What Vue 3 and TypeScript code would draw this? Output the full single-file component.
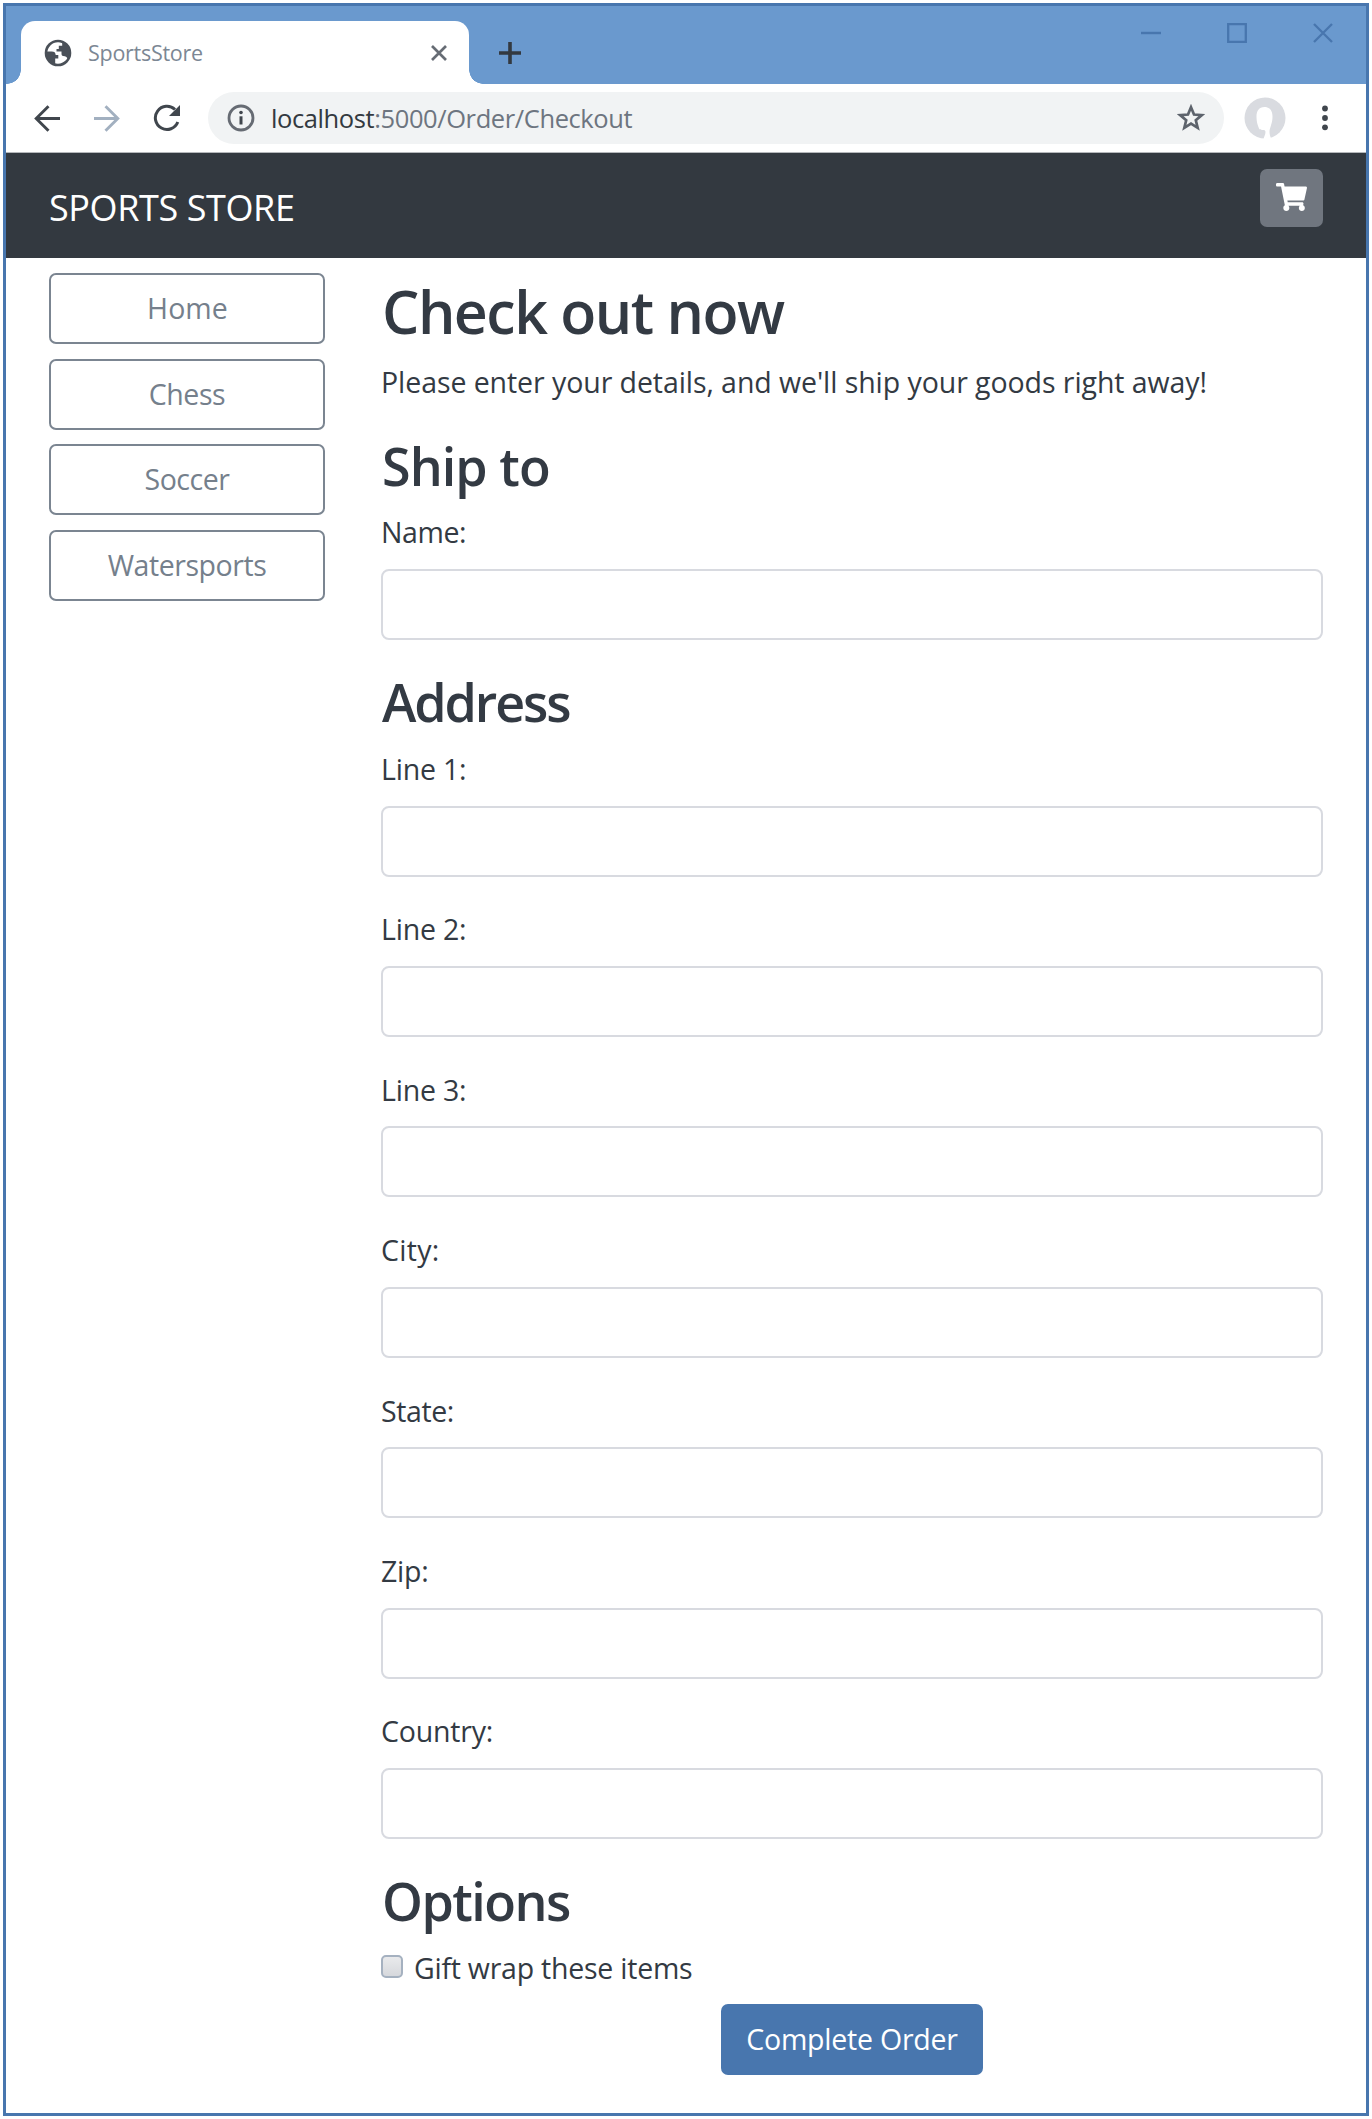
<script setup lang="ts">
import { ref } from 'vue'

interface Field {
  id: string
  label: string
  spacing: string
}

const categories = [
  { name: 'Home', cls: 'home' },
  { name: 'Chess', cls: '' },
  { name: 'Soccer', cls: '' },
  { name: 'Watersports', cls: '' },
]

const shipFields: Field[] = [{ id: 'name', label: 'Name:', spacing: 'snug' }]

const addressFields: Field[] = [
  { id: 'line1', label: 'Line 1:', spacing: '' },
  { id: 'line2', label: 'Line 2:', spacing: '' },
  { id: 'line3', label: 'Line 3:', spacing: '' },
  { id: 'city', label: 'City:', spacing: 'loose' },
  { id: 'state', label: 'State:', spacing: 'snug' },
  { id: 'zip', label: 'Zip:', spacing: '' },
  { id: 'country', label: 'Country:', spacing: '' },
]

const order = ref<Record<string, string>>({})
const giftWrap = ref(false)
</script>

<template>
  <div class="screen">
    <div class="window">
      <div class="titlebar">
        <div class="tab">
          <svg class="globe" width="28" height="28" viewBox="0 0 28 28">
            <circle cx="14" cy="14" r="12" fill="#fff" stroke="#4a5058" stroke-width="2.600" />
            <path d="M14 2.500C20 2 25.500 8 25.500 14c0 2.500-.7 4.500-1.600 6-1-2.200-2.300-3-4.700-3.100-1.300-.2-1.700-1-1.700-2.500v-2H12.500V10h2.300V6.800h3.400V4.200c-1-1-2.500-1.500-4.200-1.700z" fill="#4a5058" />
            <path d="M2.500 12.500h5.200c2.700 0 3.800 1.200 4 3.400h2.600v3.600h-3.100v5.800C6 24.500 2 20 2.500 12.500z" fill="#4a5058" />
          </svg>
          <span class="tab-title">SportsStore</span>
          <svg class="tab-close" width="18" height="18" viewBox="0 0 18 18">
            <path d="M2 2l14 14M16 2L2 16" fill="none" stroke="#666c74" stroke-width="2.700" />
          </svg>
        </div>
        <svg class="new-tab" width="24" height="24" viewBox="0 0 24 24">
          <path d="M12 1v22M1 12h22" fill="none" stroke="#333940" stroke-width="3.600" />
        </svg>
        <div class="controls">
          <svg width="20" height="20" viewBox="0 0 20 20">
            <path d="M0 10h20" fill="none" stroke="#4876ae" stroke-width="2.400" />
          </svg>
          <svg width="20" height="20" viewBox="0 0 20 20">
            <path d="M1.200 1.200h17.600v17.600H1.200z" fill="none" stroke="#4876ae" stroke-width="2.300" />
          </svg>
          <svg width="20" height="20" viewBox="0 0 20 20">
            <path d="M1 1l18 18M19 1L1 19" fill="none" stroke="#4876ae" stroke-width="2.300" />
          </svg>
        </div>
      </div>

      <div class="toolbar">
        <svg class="back" width="27" height="27" viewBox="0 0 27 27">
          <path d="M26 13.500H2.500M14.500 1.200L2.200 13.500l12.300 12.300" fill="none" stroke="#40464d" stroke-width="2.900" />
        </svg>
        <svg class="forward" width="27" height="27" viewBox="0 0 27 27">
          <path d="M1 13.500h23.500M12.500 1.200l12.300 12.300-12.300 12.300" fill="none" stroke="#a2b0c0" stroke-width="2.900" />
        </svg>
        <svg class="reload" width="28" height="28" viewBox="0 0 28 28">
          <path d="M24.800 18A11.600 11.600 0 1 1 22 5.500" fill="none" stroke="#40464d" stroke-width="3" />
          <path d="M27 1v11H16z" fill="#40464d" />
        </svg>
        <div class="omnibox">
          <svg width="28" height="28" viewBox="0 0 28 28">
            <circle cx="14" cy="14" r="12" fill="none" stroke="#666b73" stroke-width="2.800" />
            <path d="M14 12.300v8.200" stroke="#40464d" stroke-width="3" />
            <circle cx="14" cy="8.500" r="1.800" fill="#40464d" />
          </svg>
          <span class="url"><span class="host">localhost</span>:5000/Order/Checkout</span>
          <svg class="star" width="28" height="28" viewBox="0 0 28 28">
            <path d="M14 3.200l3 7.300 7.800.6-6 5.100 1.900 7.700-6.700-4.200-6.700 4.200 1.900-7.700-6-5.100 7.800-.6z" fill="none" stroke="#5d636c" stroke-width="2.700" />
          </svg>
        </div>
        <svg class="avatar" width="42" height="42" viewBox="0 0 42 42">
          <circle cx="21" cy="21" r="20.500" fill="#d9dbe0" />
          <path d="M20.500 10c-5.500 0-8 4-8 9.500 0 6 1.500 9 2.500 12 1.500 3 6.500-.5 6.500 3.500 0 3-2 5.500-2 7.500h8c-2-4-2.500-8-1.500-11 1-3.500 2.500-6.500 2.500-12 0-5.500-2.500-9.500-8-9.500z" fill="#fff" />
        </svg>
        <svg class="menu" width="8" height="26" viewBox="0 0 8 26">
          <circle cx="4" cy="3.500" r="2.900" fill="#40464d" />
          <circle cx="4" cy="13" r="2.900" fill="#40464d" />
          <circle cx="4" cy="22.300" r="2.900" fill="#40464d" />
        </svg>
      </div>

      <nav class="navbar">
        <span class="brand">SPORTS STORE</span>
        <button class="cart" type="button" aria-label="Cart">
          <svg width="31" height="28" viewBox="0 0 576 512" preserveAspectRatio="none">
            <path fill="#fff" d="M528.120 301.319l47.273-208C578.806 78.301 567.391 64 551.990 64H159.208l-9.166-44.810C147.758 8.021 137.930 0 126.529 0H24C10.745 0 0 10.745 0 24v16c0 13.255 10.745 24 24 24h69.883l70.248 343.435C147.325 417.100 136 435.222 136 456c0 30.928 25.072 56 56 56s56-25.072 56-56c0-15.674-6.447-29.835-16.824-40h209.647C430.447 426.165 424 440.326 424 456c0 30.928 25.072 56 56 56s56-25.072 56-56c0-22.172-12.888-41.332-31.579-50.405l5.517-24.276c3.413-15.018-8.002-29.319-23.403-29.319H218.117l-6.545-32h293.145c11.206 0 20.920-7.754 23.403-18.681z" />
          </svg>
        </button>
      </nav>

      <div class="body">
        <aside class="sidebar">
          <a v-for="c in categories" :key="c.name" class="category" :class="c.cls">{{ c.name }}</a>
        </aside>

        <main class="content">
          <h1>Check out now</h1>
          <p class="lead">Please enter your details, and we'll ship your goods right away!</p>

          <h3 class="ship">Ship to</h3>
          <div v-for="f in shipFields" :key="f.id" class="field">
            <label :for="f.id" :class="f.spacing">{{ f.label }}</label>
            <input :id="f.id" v-model="order[f.id]" type="text" />
          </div>

          <h3 class="address">Address</h3>
          <div v-for="f in addressFields" :key="f.id" class="field">
            <label :for="f.id" :class="f.spacing">{{ f.label }}</label>
            <input :id="f.id" v-model="order[f.id]" type="text" />
          </div>

          <h3 class="options">Options</h3>
          <label class="gift">
            <input v-model="giftWrap" type="checkbox" />
            <span>Gift wrap these items</span>
          </label>

          <div class="actions">
            <button class="submit" type="button">Complete Order</button>
          </div>
        </main>
      </div>
    </div>
  </div>
</template>

<style>
body {
  background: #fff;
}
</style>

<style scoped>
* {
  box-sizing: border-box;
}

svg {
  display: block;
  flex: none;
}

.screen {
  height: 2119px;
  padding: 3px 3px 3px 3px;
  overflow: hidden;
  font-family: 'Open Sans', 'Noto Sans', sans-serif;
  font-size: 28.5px;
  color: #333a43;
}

.window {
  display: flex;
  flex-direction: column;
  height: 2113px;
  border: 3px solid #4876ae;
  background: #fff;
}

/* Browser chrome */
.titlebar {
  display: flex;
  height: 78px;
  flex: none;
  padding: 15px 0 0 15px;
  background: #6a99ce;
}

.tab {
  position: relative;
  display: flex;
  align-items: center;
  width: 448px;
  height: 63px;
  padding: 0 21px 0 23px;
  border-radius: 14px 14px 0 0;
  background: #fff;
}

.tab::before,
.tab::after {
  content: '';
  position: absolute;
  bottom: 0;
  width: 14px;
  height: 14px;
}

.tab::before {
  left: -14px;
  background: radial-gradient(circle at 0 0, transparent 13.5px, #fff 14px);
}

.tab::after {
  right: -14px;
  background: radial-gradient(circle at 100% 0, transparent 13.5px, #fff 14px);
}

.tab-title {
  margin-left: 16px;
  font-size: 21.5px;
  line-height: 30px;
  letter-spacing: -0.28px;
  color: #7c8794;
}

.tab-close {
  margin-left: auto;
}

.new-tab {
  margin: 20px 0 0 29px;
}

.controls {
  display: flex;
  gap: 66px;
  margin: 2px 33px 0 auto;
}

.toolbar {
  display: flex;
  align-items: center;
  height: 69px;
  flex: none;
  padding: 0 37px 0 28px;
  border-bottom: 1px solid #b5b8bb;
}

.forward {
  margin-left: 32px;
}

.reload {
  margin-left: 33px;
}

.omnibox {
  display: flex;
  align-items: center;
  width: 1016px;
  height: 52px;
  margin-left: 27px;
  padding: 0 19px 0 19px;
  border-radius: 26px;
  background: #f1f3f4;
}

.url {
  margin-left: 16px;
  font-size: 25.5px;
  line-height: 36px;
  letter-spacing: -0.4px;
  color: #6d7580;
  white-space: nowrap;
}

.host {
  color: #333940;
}

.star {
  margin-left: auto;
}

.avatar {
  margin-left: 20px;
}

.menu {
  margin-left: auto;
}

/* Store header */
.navbar {
  display: flex;
  justify-content: space-between;
  align-items: flex-start;
  height: 104.5px;
  flex: none;
  padding: 15.5px 43px 0 43px;
  background: #333940;
}

.brand {
  margin-top: 15.5px;
  font-size: 36px;
  line-height: 48px;
  letter-spacing: -0.4px;
  color: #fff;
}

.cart {
  display: flex;
  align-items: center;
  justify-content: center;
  width: 63px;
  height: 58px;
  padding: 0 0 1px;
  border: 0;
  border-radius: 7px;
  background: #70767f;
}

/* Store page */
.body {
  display: flex;
  padding: 0 43px 0 43px;
}

.sidebar {
  display: flex;
  flex-direction: column;
  gap: 14.7px;
  width: 276px;
  flex: none;
  margin: 15.500px 56px 0 0;
}

.category {
  height: 71px;
  border: 2px solid #7b8591;
  border-radius: 7px;
  line-height: 67px;
  letter-spacing: -0.45px;
  text-align: center;
  color: #75808c;
}

.category.home {
  padding-left: 1px;
  letter-spacing: 0.1px;
}

.content {
  display: flex;
  flex-direction: column;
  flex: 1;
}

h1,
h3,
p {
  margin: 0;
}

h1,
h3 {
  padding-left: 1px;
}

h1 {
  margin-top: 17px;
  font-size: 59px;
  font-weight: 600;
  line-height: 72px;
  letter-spacing: -1.5px;
}

.lead {
  margin-top: 13px;
  line-height: 44px;
  letter-spacing: -0.07px;
  white-space: nowrap;
}

h3 {
  font-size: 52px;
  font-weight: 600;
  line-height: 62px;
}

.ship {
  margin-top: 31px;
  letter-spacing: -0.93px;
}

.address {
  margin-top: 14.4px;
  letter-spacing: -2.1px;
}

.options {
  margin-top: 14.4px;
  letter-spacing: -1.52px;
}

.field {
  display: flex;
  flex-direction: column;
  height: 160.4px;
}

.field label {
  margin: 13.8px 0 14.6px;
  line-height: 44px;
  letter-spacing: -0.2px;
}

.field label.snug {
  letter-spacing: -0.4px;
}

.field label.loose {
  letter-spacing: 0.3px;
}

.field input {
  width: 100%;
  height: 71px;
  padding: 0 18px;
  border: 2px solid #d8dae0;
  border-radius: 8px;
  background: #fff;
  font: inherit;
  color: inherit;
  outline: none;
}

.gift {
  display: flex;
  align-items: center;
  margin-top: 13.5px;
  line-height: 44px;
  letter-spacing: -0.24px;
}

.gift input {
  appearance: none;
  width: 22px;
  height: 23px;
  margin: -3px 11px 0 0;
  border: 2px solid #a5b1c0;
  border-radius: 5px;
  background: linear-gradient(#e9eaec, #d6d8dc);
}

.actions {
  display: flex;
  justify-content: center;
  margin-top: 14.5px;
}

.submit {
  width: 262px;
  height: 71px;
  padding: 0 0 1px;
  border: 0;
  border-radius: 7px;
  background: #4876ae;
  font: inherit;
  letter-spacing: -0.22px;
  color: #fff;
}
</style>
